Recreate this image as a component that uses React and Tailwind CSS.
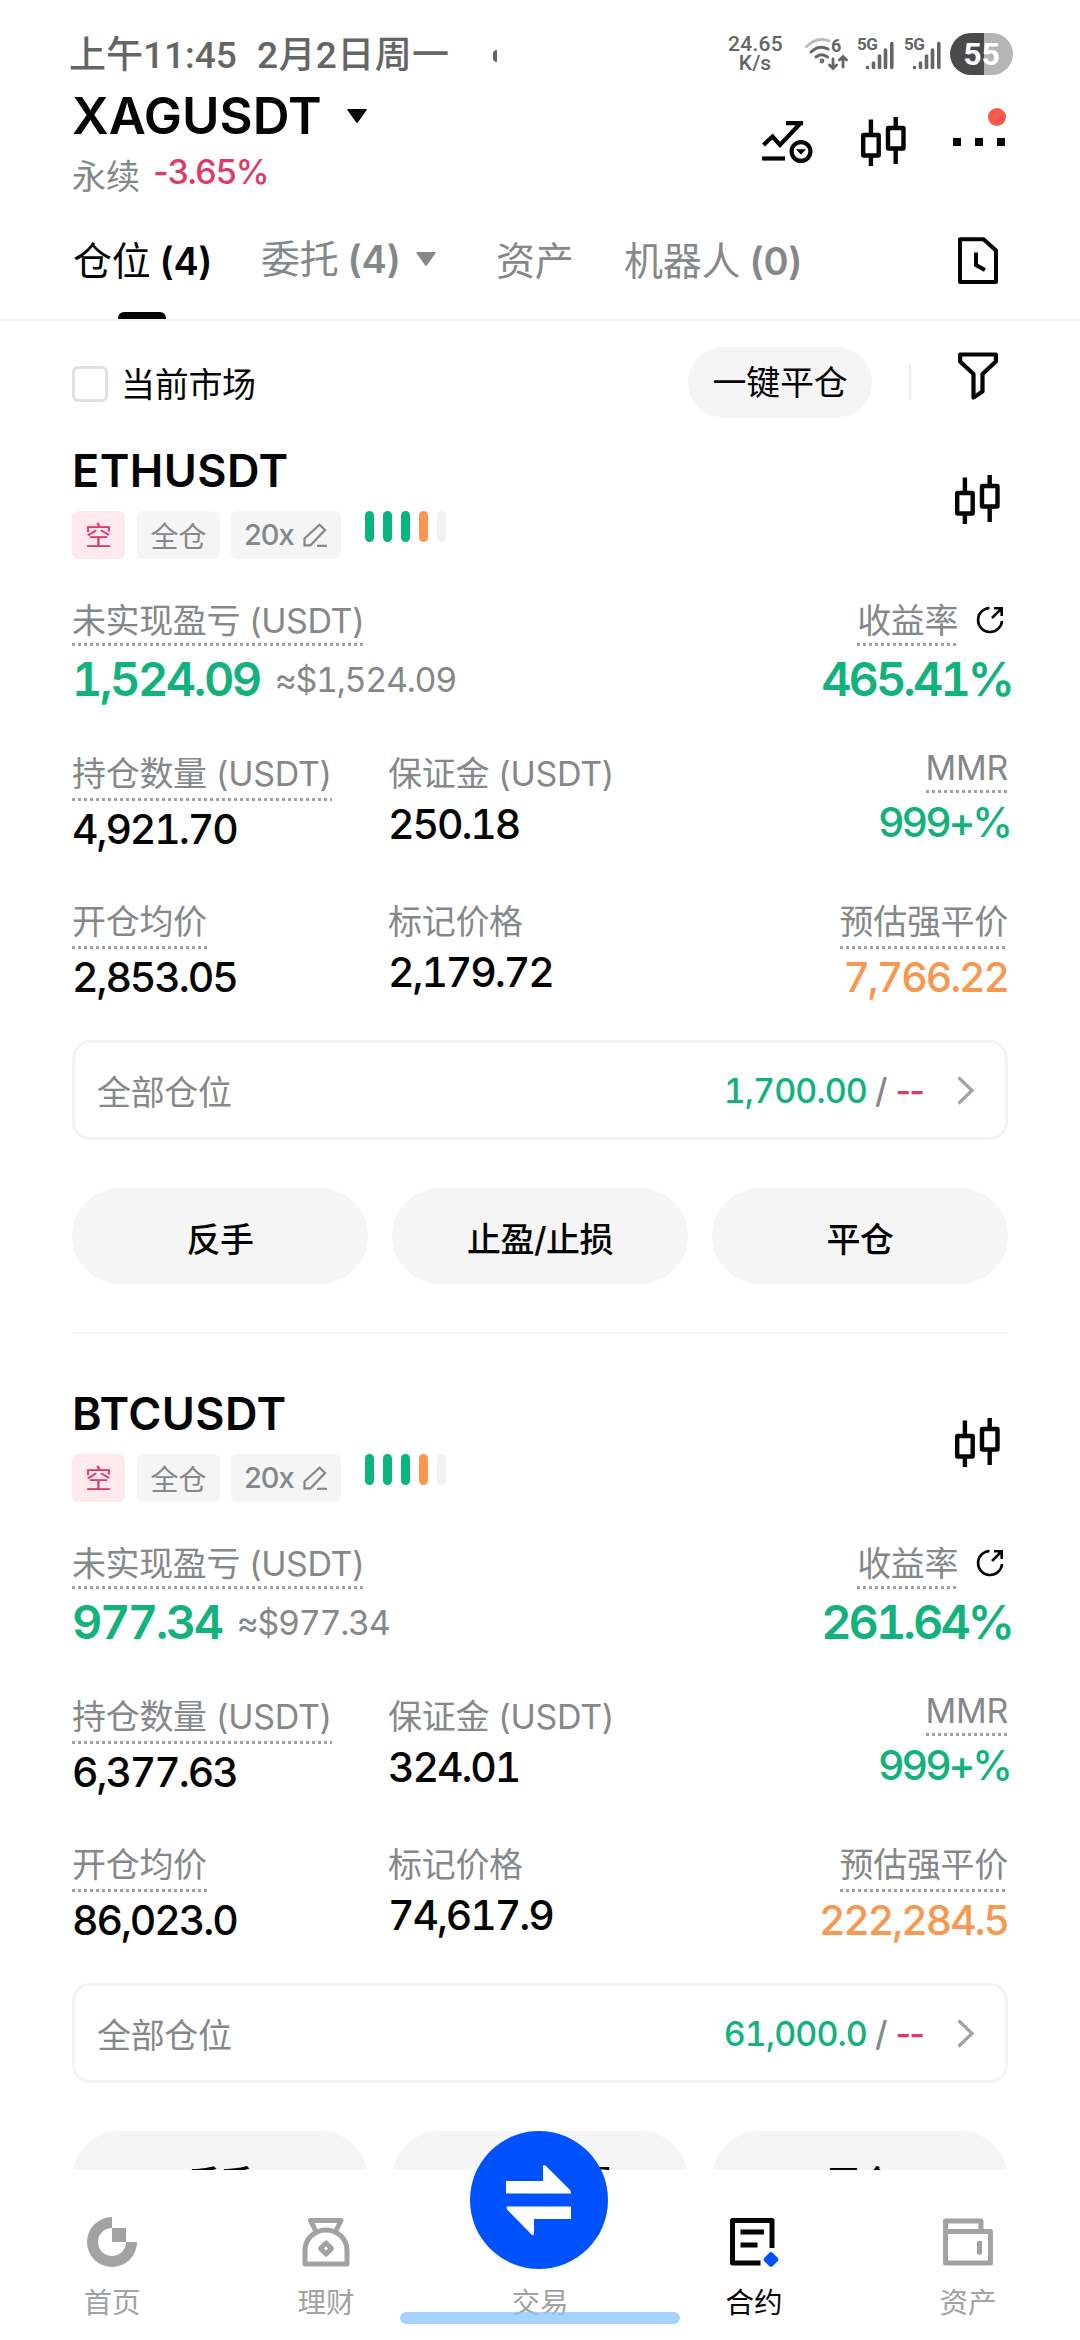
const positions = [
    {
        symbol: "ETHUSDT",
        pnl: "1,524.09",
        pnlUsd: "≈$1,524.09",
        roi: "465.41%",
        size: "4,921.70",
        margin: "250.18",
        mmr: "999+%",
        entry: "2,853.05",
        mark: "2,179.72",
        liq: "7,766.22",
        total: "1,700.00",
    },
    {
        symbol: "BTCUSDT",
        pnl: "977.34",
        pnlUsd: "≈$977.34",
        roi: "261.64%",
        size: "6,377.63",
        margin: "324.01",
        mmr: "999+%",
        entry: "86,023.0",
        mark: "74,617.9",
        liq: "222,284.5",
        total: "61,000.0",
    },
];

const CandleIcon = () => (
    <svg className="block w-[45px] h-[50px]" viewBox="0 0 45 50" fill="none" stroke="#050505" strokeWidth="4.4">
        <rect x="2.2" y="18" width="15.5" height="20.5" rx="0.5" />
        <rect x="27" y="11" width="15.5" height="20.5" rx="0.5" />
        <path d="M9.9 2.5V17M9.9 39v10M34.7 0v10M34.7 32v15" />
    </svg>
);

const TrendIcon = () => (
    <svg className="block w-[51px] h-[43px]" viewBox="0 0 51 43" fill="none" stroke="#050505" strokeWidth="4.2">
        <path d="M1.5 24L10.500 15.5L18 24L38 2.8M24 2.2H41" />
        <path d="M0 37.5H23" />
        <circle cx="39" cy="30.5" r="9.4" />
        <path d="M34 28.2H44L39 33.8Z" fill="#050505" stroke="none" />
    </svg>
);

const RecordIcon = () => (
    <svg className="block w-10 h-12" viewBox="0 0 40 48" fill="none" stroke="#050505" strokeWidth="4" strokeLinejoin="round">
        <path d="M2 2.3H25.5L38 13.5V45H2Z" />
        <path d="M18 15.5V28L27 33" strokeLinejoin="miter" />
    </svg>
);

const FunnelIcon = () => (
    <svg className="block w-10 h-12" viewBox="0 0 40 48" fill="none" stroke="#050505" strokeWidth="4.2" strokeLinejoin="round">
        <path d="M2.1 2.5H37.900V9.5L24.5 22V39.5L15.5 45.5V22L2.1 9.5Z" />
    </svg>
);

const PencilIcon = () => (
    <svg className="block w-[25px] h-[25px]" viewBox="0 0 25 25" fill="none" stroke="#85888a" strokeWidth="2.2">
        <path d="M1.5 15.5L16.5 1.8L22 7L7.5 22.3H1.5Z" />
        <path d="M14 22.8H24" />
    </svg>
);

const ShareIcon = () => (
    <svg className="block w-7 h-7" viewBox="0 0 28 28" fill="none" stroke="#050505" strokeWidth="2.6">
        <path d="M13.5 2A12 12 0 1 0 26 15" />
        <path d="M16 12L25.5 2.5M18 2.3H25.7V10" />
    </svg>
);

const Caret = ({ className }) => (
    <svg className={`block w-5 h-[14px] ${className}`} viewBox="0 0 20 14" fill="currentColor">
        <path d="M1 0H19Q20.500 0 19.500 1.200L11 13.300Q10 14.500 9 13.300L0.500 1.200Q-0.500 0 1 0Z" />
    </svg>
);

const Signal = () => (
    <div className="flex h-8">
        <span className="w-[21px] text-[17px] leading-[12px] font-bold tracking-[-0.5px] whitespace-nowrap">5G</span>
        <svg className="-ml-[13px] block w-[29px] h-8" viewBox="0 0 29 32" stroke="#656565" strokeWidth="3.6" strokeLinecap="round">
            <path d="M2.500 29.500V29.600M8.500 25V29.500M14.500 18V29.500M20.500 12V29.500M26.800 5.500V29.500" />
        </svg>
    </div>
);

const StatusBar = () => (
    <div className="flex h-[86px] items-center justify-between pt-6 pl-[69px] pr-[67px] text-[#656565]">
        <div className="flex items-center pt-0.5 text-[37px] font-medium font-['Roboto','Noto_Sans_CJK_SC',sans-serif] whitespace-nowrap leading-[50px]">
            <span className="w-[188px]">上午11:45</span>
            <span className="w-[236px] tracking-[0.4px]">2月2日周一</span>
            <div className="h-3 w-1 rounded-l-full bg-[#656565]" />
        </div>
        <div className="flex items-center pb-[3px] font-['Roboto',sans-serif]">
            <div className="mr-[23px] w-[54px] text-center text-[21px] font-medium leading-[19px] whitespace-nowrap">
                <div className="tracking-[0.3px]">24.65</div>
                <div>K/s</div>
            </div>
            <svg className="mr-[9px] block w-[43px] h-8" viewBox="0 0 43 32" fill="none" stroke="#656565" strokeWidth="3" strokeLinecap="round">
                <path d="M1.500 8.500Q12 -1.500 24 2.800" stroke="#bdbdbd" />
                <path d="M6 14Q14 6.500 23 11" />
                <path d="M11 19Q16.500 14.500 22.500 19" />
                <circle cx="17" cy="23" r="0.900" />
                <path d="M28 21V30M24.500 27L28 30.500L31.500 27M38 29V19M34.500 22L38 18.500L41.500 22" strokeWidth="2.800" />
                <text x="26" y="13.500" fontSize="18" fontWeight="700" fill="#656565" stroke="none">6</text>
            </svg>
            <Signal />
            <div className="w-[10px]" />
            <Signal />
            <div className="ml-[9px] flex h-[42px] w-[63px] items-center justify-center rounded-full bg-[linear-gradient(90deg,#4a4a4a_54%,#b5b5b5_54%)] text-[32px] font-bold text-white">
                55
            </div>
        </div>
    </div>
);

const Header = () => (
    <div className="flex h-[112px] items-center justify-between pl-[72px] pr-[75px]">
        <div>
            <div className="flex h-[60px] items-center">
                <span className="w-[275px] text-[51px] font-semibold text-[#050505]">XAGUSDT</span>
                <Caret className="text-[#050505]" />
            </div>
            <div className="flex h-[52px] text-[34px]">
                <span className="w-[81px] pt-[5px] leading-[52px] text-[#85888a]">永续</span>
                <span className="font-medium leading-[52px] tracking-[-1px] text-[#de3a67]">-3.65%</span>
            </div>
        </div>
        <div className="flex items-center">
            <TrendIcon />
            <div className="ml-12"><CandleIcon /></div>
            <div className="relative ml-[47px] flex gap-[14px]">
                <div className="size-2 bg-[#050505]" />
                <div className="size-2 bg-[#050505]" />
                <div className="size-2 bg-[#050505]" />
                <div className="absolute -right-px -top-[30px] size-[18px] rounded-full bg-[#f55a4b]" />
            </div>
        </div>
    </div>
);

const Tabs = () => (
    <div className="flex h-[123px] justify-between border-b-2 border-[#f2f3f3] pl-[73px] pr-[82px] text-[39px] leading-[126px] tracking-[-0.2px] text-[#85888a] whitespace-nowrap">
        <div className="flex">
            <div className="relative w-[188px] text-[#050505]">
                仓位<span className="ml-[9px] text-[38px] font-semibold tracking-[-0.4px]">(4)</span>
                <div className="absolute bottom-0 left-[45px] h-[7px] w-12 rounded-t-md bg-[#050505]" />
            </div>
            <div className="flex w-[235px] items-center">
                委托<span className="ml-[9px] text-[38px] font-semibold">(4)</span>
                <Caret className="ml-[15px]" />
            </div>
            <div className="w-[128px]">资产</div>
            <div>
                机器人<span className="ml-[9px] text-[38px] font-semibold">(0)</span>
            </div>
        </div>
        <div className="pt-[39px]"><RecordIcon /></div>
    </div>
);

const FilterBar = () => (
    <div className="flex h-[122px] items-center justify-between pl-[72px] pr-[82px] text-[34px] tracking-[-0.3px] text-[#050505]">
        <div className="flex items-center pt-[4px]">
            <div className="mr-[13px] size-9 rounded-md border-[3px] border-[#e0e0e0]" />
            当前市场
        </div>
        <div className="flex items-center">
            <button className="mr-[37px] h-[71px] w-[184px] rounded-full bg-[#f5f5f5]">一键平仓</button>
            <div className="mr-[47px] h-9 w-0.5 bg-[#efefef]" />
            <div className="pb-[12px]"><FunnelIcon /></div>
        </div>
    </div>
);

const Dots = ({ className = "mt-1" }) => (
    <div className={`h-[3px] bg-[repeating-linear-gradient(90deg,#a0a2a4_0_3px,transparent_3px_6px)] ${className}`} />
);

const Tags = () => (
    <div className="mt-3 flex h-12 text-[29px] leading-[52px] text-[#85888a]">
        <span className="mr-3 w-[53px] rounded-md bg-[#feeaee] text-center text-[27px] text-[#de3a67]">空</span>
        <span className="mr-[11px] w-[83px] rounded-md bg-[#f5f5f5] text-center text-[28px]">全仓</span>
        <span className="flex w-[110px] items-center rounded-md bg-[#f5f5f5] pl-[13px]">
            <span className="w-[59px] font-medium leading-[48px] tracking-[-1px]">20x</span>
            <PencilIcon />
        </span>
        <div className="ml-6 flex gap-[9px]">
            <div className="h-[31px] w-[9px] rounded-full bg-[#08b57e]" />
            <div className="h-[31px] w-[9px] rounded-full bg-[#08b57e]" />
            <div className="h-[31px] w-[9px] rounded-full bg-[#08b57e]" />
            <div className="h-[31px] w-[9px] rounded-full bg-[#fb9650]" />
            <div className="h-[31px] w-[9px] rounded-full bg-[#f0f2f3]" />
        </div>
    </div>
);

// one label/value pair, the label is underlined when it opens a hint
const Cell = ({ label, value, hint = true, labelClass = "h-[41px] leading-[41px]", valueClass = "h-[56px] leading-[56px] tracking-[-2.1px]" }) => (
    <>
        <div className="text-[34px] tracking-[-0.3px] text-[#85888a]">
            <div className={labelClass}>{label}</div>
            {hint && <Dots />}
        </div>
        <div className={`text-[41px] font-medium tabular-nums ${valueClass}`}>{value}</div>
    </>
);

const PositionCard = ({ p }) => (
    <div className="h-[943px] px-[72px] text-[#050505] whitespace-nowrap">
        <div className="flex justify-between pr-2">
            <div>
                <div className="h-14 text-[45px] font-semibold leading-[56px] tracking-[0.4px]">{p.symbol}</div>
                <Tags />
            </div>
            <div className="pt-8"><CandleIcon /></div>
        </div>

        <div className="mt-[42px] flex justify-between">
            <div className="flex flex-col items-start">
                <div className="text-[34px] leading-[40px] tracking-[-0.4px] text-[#85888a]">
                    未实现盈亏 (USDT)
                    <Dots className="mt-0.5" />
                </div>
                <div className="flex h-[66px] items-center tabular-nums">
                    <span className="text-[47px] font-semibold tracking-[-2.5px] text-[#12b27c]">{p.pnl}</span>
                    <span className="ml-[15px] text-[34px] tracking-[-1.3px] text-[#85888a]">{p.pnlUsd}</span>
                </div>
            </div>
            <div className="flex flex-col items-end">
                <div className="flex pr-1">
                    <div className="text-[34px] leading-[40px] tracking-[-0.4px] text-[#85888a]">
                        收益率
                        <Dots className="mt-0.5" />
                    </div>
                    <div className="ml-[18px] pt-[5px]"><ShareIcon /></div>
                </div>
                <div className="-mr-1 h-[66px] text-[47px] font-semibold leading-[66px] tracking-[-3px] tabular-nums text-[#12b27c]">{p.roi}</div>
            </div>
        </div>

        <div className="mt-[38px] flex h-[148px]">
            <div className="flex w-[316px] flex-col items-start pt-[3px]">
                <Cell label="持仓数量 (USDT)" value={p.size} />
            </div>
            <div className="flex flex-1 flex-col items-start pt-[3px]">
                <Cell label="保证金 (USDT)" value={p.margin} hint={false} valueClass="h-[60px] leading-[60px] tracking-[-2.1px]" />
            </div>
            <div className="flex flex-col items-end">
                <Cell label="MMR" value={p.mmr} labelClass="h-9 leading-9" valueClass="-mr-0.5 h-[58px] leading-[58px] tracking-[-3px] text-[#12b27c]" />
            </div>
        </div>
        <div className="flex h-[142px]">
            <div className="flex w-[316px] flex-col items-start pt-[3px]">
                <Cell label="开仓均价" value={p.entry} />
            </div>
            <div className="flex flex-1 flex-col items-start pt-[3px]">
                <Cell label="标记价格" value={p.mark} hint={false} valueClass="h-[60px] leading-[60px] tracking-[-2.1px]" />
            </div>
            <div className="flex flex-col items-end pt-[3px]">
                <Cell label="预估强平价" value={p.liq} valueClass="h-[56px] leading-[56px] tracking-[-2.1px] text-[#f79850]" />
            </div>
        </div>

        <div className="flex h-[100px] items-center rounded-[18px] border-[3px] border-[#f3f3f3] pl-[22px] pr-[30px] text-[34px]">
            <span className="flex-1 pt-1 tracking-[-0.35px] text-[#85888a]">全部仓位</span>
            <span className="font-medium tracking-[-0.9px] tabular-nums text-[#12b27c]">{p.total}</span>
            <span className="ml-[8px] font-medium text-[#85888a]">/</span>
            <span className="ml-[8px] font-medium tracking-[-2px] text-[#de3a67]">--</span>
            <svg className="ml-[34px] block w-[18px] h-[29px]" viewBox="0 0 18 29" fill="none" stroke="#a0a2a4" strokeWidth="3.2">
                <path d="M1.5 1.500L15 14.500L1.500 27.500" />
            </svg>
        </div>

        <div className="mt-12 flex gap-6">
            {["反手", "止盈/止损", "平仓"].map((text) => (
                <button key={text} className="h-24 flex-1 rounded-full bg-[#f5f5f5] pt-1.5 text-[34px] font-medium tracking-[-0.5px]">
                    {text}
                </button>
            ))}
        </div>
        <div className="mt-12 h-0.5 bg-[#f2f3f3]" />
    </div>
);

const HomeIcon = () => (
    <svg className="block size-[50px]" viewBox="0 0 50 50" fill="#a0a2a4">
        <path d="M25 0V11A14 14 0 1 0 39 25H50A25 25 0 1 1 25 0Z" />
        <rect x="25" y="11" width="14" height="14" />
    </svg>
);

const EarnIcon = () => (
    <svg className="block size-[50px]" viewBox="0 0 50 50" fill="none" stroke="#a0a2a4" strokeWidth="5" strokeLinejoin="round">
        <path d="M14.500 13.500L9.500 3.500H40L35 13.500" />
        <path d="M4 47V33A21 20 0 0 1 46 33V47Z" />
        <path d="M25 26L30.500 31.500L25 37L19.500 31.500Z" />
    </svg>
);

const FuturesIcon = () => (
    <svg className="block size-[50px]" viewBox="0 0 50 50" fill="none" stroke="#050505" strokeWidth="5" strokeLinejoin="round">
        <path d="M31.500 46H3.500V3.500H43V31" />
        <path d="M11.500 15H35M11.500 28H28.500" />
        <rect x="37" y="37.500" width="10" height="10" rx="2" transform="rotate(45 42 42.500)" fill="#0052ff" stroke="#0052ff" strokeWidth="2" />
    </svg>
);

const WalletIcon = () => (
    <svg className="block size-[50px]" viewBox="0 0 50 50" fill="none" stroke="#a0a2a4" strokeWidth="5" strokeLinejoin="round">
        <path d="M38 14.500V4H2.500V14.500H47.500V46H2.500V14.500" />
        <path d="M36.500 24V37.500" />
    </svg>
);

const navItems = [
    { label: "首页", icon: <HomeIcon /> },
    { label: "理财", icon: <EarnIcon /> },
    { label: "交易", icon: <div className="h-[50px]" /> },
    { label: "合约", icon: <FuturesIcon />, active: true },
    { label: "资产", icon: <WalletIcon /> },
];

const BottomNav = () => (
    <div className="relative h-[170px] bg-white px-[5px] pt-[47px]">
        <div className="grid grid-cols-5">
            {navItems.map((item) => (
                <div key={item.label} className="flex flex-col items-center">
                    {item.icon}
                    <span className={`pt-4 text-[28.5px] leading-10 ${item.active ? "text-[#050505]" : "text-[#a0a2a4]"}`}>{item.label}</span>
                </div>
            ))}
        </div>
        <div className="absolute left-[470px] -top-[39px] flex size-[138px] items-center justify-center rounded-full bg-[#0052ff]">
            <svg className="block w-[66px] h-[72px]" viewBox="0 0 66 72" fill="white">
                <path d="M0 17H37V2.500Q37 0 39.500 1.500L64 26Q65 27 65 29.500H0Z" />
                <path d="M65 55H28V69.500Q28 72 25.500 70.500L1.500 46Q0.500 45 0.500 42.500H65Z" />
            </svg>
        </div>
        <div className="absolute bottom-4 left-[400px] h-3 w-[280px] rounded-full bg-[#90c7ff]/80" />
    </div>
);

export default function App() {
    return (
        <div className="flex h-[2340px] w-[1080px] flex-col overflow-hidden bg-white font-['Inter','Noto_Sans_CJK_SC',sans-serif]">
            <StatusBar />
            <Header />
            <Tabs />
            <div className="min-h-0 flex-1 overflow-hidden">
                <FilterBar />
                {positions.map((p) => (
                    <PositionCard key={p.symbol} p={p} />
                ))}
            </div>
            <BottomNav />
        </div>
    );
}
